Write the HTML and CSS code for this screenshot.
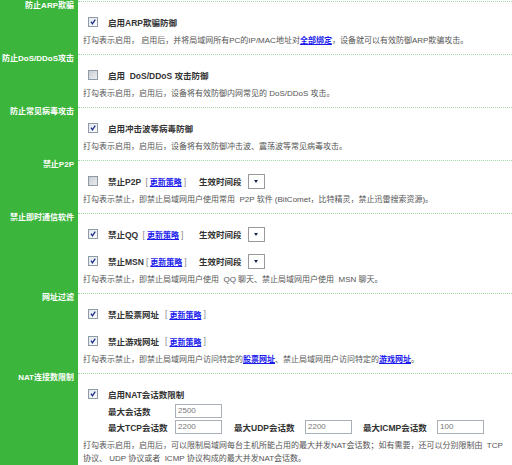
FILE: index.html
```html
<!DOCTYPE html>
<html>
<head>
<meta charset="utf-8">
<link rel="stylesheet" href="styles.css">
</head>
<body>
<div class="page">

	<div class="sec">
		<div class="label">防止ARP欺骗</div>
		<div class="body">
			<div class="opt">
				<span class="cb on"><svg viewBox="0 0 10 10"><path d="M2.5 4.5 L4.3 7.3 L7.8 2" /></svg></span>
				<b>启用ARP欺骗防御</b>
			</div>
			<p class="desc">打勾表示启用， 启用后，并将局域网所有PC的IP/MAC地址对<a href="#">全部绑定</a>，设备就可以有效防御ARP欺骗攻击。</p>
		</div>
	</div>

	<div class="sec">
		<div class="label">防止DoS/DDoS攻击</div>
		<div class="body">
			<div class="opt">
				<span class="cb"></span>
				<b>启用&nbsp; DoS/DDoS 攻击防御</b>
			</div>
			<p class="desc">打勾表示启用，启用后，设备将有效防御内网常见的 DoS/DDoS 攻击。</p>
		</div>
	</div>

	<div class="sec">
		<div class="label">防止常见病毒攻击</div>
		<div class="body">
			<div class="opt">
				<span class="cb on"><svg viewBox="0 0 10 10"><path d="M2.5 4.5 L4.3 7.3 L7.8 2" /></svg></span>
				<b>启用冲击波等病毒防御</b>
			</div>
			<p class="desc">打勾表示启用，启用后，设备将有效防御冲击波、震荡波等常见病毒攻击。</p>
		</div>
	</div>

	<div class="sec">
		<div class="label">禁止P2P</div>
		<div class="body">
			<div class="opt">
				<span class="cb"></span>
				<span class="title"><b>禁止P2P</b> <span class="br">[</span><a class="pol" href="#">更新策略</a><span class="br">]</span></span>
				<b class="when">生效时间段</b>
				<span class="sel"></span>
			</div>
			<p class="desc">打勾表示禁止，即禁止局域网用户使用常用 &nbsp;P2P 软件 (BitComet，比特精灵，禁止迅雷搜索资源)。</p>
		</div>
	</div>

	<div class="sec">
		<div class="label">禁止即时通信软件</div>
		<div class="body">
			<div class="opt">
				<span class="cb on"><svg viewBox="0 0 10 10"><path d="M2.5 4.5 L4.3 7.3 L7.8 2" /></svg></span>
				<span class="title"><b>禁止QQ</b> <span class="br">[</span><a class="pol" href="#">更新策略</a><span class="br">]</span></span>
				<b class="when">生效时间段</b>
				<span class="sel"></span>
			</div>
			<div class="opt">
				<span class="cb on"><svg viewBox="0 0 10 10"><path d="M2.5 4.5 L4.3 7.3 L7.8 2" /></svg></span>
				<span class="title"><b>禁止MSN</b><span class="br">[</span><a class="pol" href="#">更新策略</a><span class="br">]</span></span>
				<b class="when">生效时间段</b>
				<span class="sel"></span>
			</div>
			<p class="desc">打勾表示禁止，即禁止局域网用户使用 &nbsp;QQ 聊天、禁止局域网用户使用 &nbsp;MSN 聊天。</p>
		</div>
	</div>

	<div class="sec">
		<div class="label">网址过滤</div>
		<div class="body">
			<div class="opt">
				<span class="cb on"><svg viewBox="0 0 10 10"><path d="M2.5 4.5 L4.3 7.3 L7.8 2" /></svg></span>
				<b>禁止股票网址</b><span class="br wide">[</span><a class="pol" href="#">更新策略</a><span class="br">]</span>
			</div>
			<div class="opt">
				<span class="cb on"><svg viewBox="0 0 10 10"><path d="M2.5 4.5 L4.3 7.3 L7.8 2" /></svg></span>
				<b>禁止游戏网址</b><span class="br wide">[</span><a class="pol" href="#">更新策略</a><span class="br">]</span>
			</div>
			<p class="desc">打勾表示禁止，即禁止局域网用户访问特定的<a href="#">股票网址</a>、禁止局域网用户访问特定的<a href="#">游戏网址</a>。</p>
		</div>
	</div>

	<div class="sec nat">
		<div class="label">NAT连接数限制</div>
		<div class="body">
			<div class="opt">
				<span class="cb on"><svg viewBox="0 0 10 10"><path d="M2.5 4.5 L4.3 7.3 L7.8 2" /></svg></span>
				<b>启用NAT会话数限制</b>
			</div>
			<div class="fields">
				<b>最大会话数</b><span class="inp">2500</span>
				<span></span><span></span><span></span><span></span>
				<b>最大TCP会话数</b><span class="inp">2200</span>
				<b>最大UDP会话数</b><span class="inp">2200</span>
				<b>最大ICMP会话数</b><span class="inp">100</span>
			</div>
			<p class="desc">打勾表示启用，启用后，可以限制局域网每台主机所能占用的最大并发NAT会话数；如有需要，还可以分别限制由 &nbsp;TCP 协议、 UDP 协议或者 &nbsp;ICMP 协议构成的最大并发NAT会话数。</p>
		</div>
	</div>

</div>
</body>
</html>
```

FILE: styles.css
```css
body {
	margin: 0;
	background-color: #fff;
	font-family: "Liberation Sans", "Noto Sans CJK SC", sans-serif;
	font-size: 8px;
	color: #555;
}

.page {
	width: 512px;
	height: 465px;
	overflow: hidden;
}

.sec {
	display: flex;
}

.label {
	width: 74px;
	flex: none;
	padding-right: 4px;
	background-color: #3cb53c;
	color: #fff;
	font-weight: bold;
	font-size: 8px;
	line-height: 7px;
	text-align: right;
	white-space: nowrap;
}

.sec:first-child .label {
	padding-top: 2px;
}

.body {
	flex: 1;
	padding: 11px 0 5px 5px;
	border-bottom: 1px dotted #a3d9a3;
}

.sec:first-child .body {
	margin-top: 1px;
	border-top: 1px dotted #a3d9a3;
}

.opt {
	display: flex;
	align-items: center;
	height: 18px;
	padding-left: 5px;
	white-space: nowrap;
	color: #333;
	font-size: 8.5px;
}

.opt + .opt {
	margin-top: 9px;
}

.opt b,
.fields b {
	color: #333;
}

.cb {
	width: 8px;
	height: 8px;
	margin-right: 10px;
	border: 1px solid #8e9aa6;
	background: linear-gradient(135deg, #c9cdd2, #eceef0);
	display: inline-block;
	flex: none;
}

.cb.on {
	background: linear-gradient(135deg, #e3e8ee, #fbfcfd);
}

.cb svg {
	display: block;
	width: 8px;
	height: 8px;
	fill: none;
	stroke: #1b2f8a;
	stroke-width: 1.6;
}

.title {
	width: 91px;
	flex: none;
}

.br {
	color: #888;
	font-weight: normal;
	margin-left: 2px;
}

.br.wide {
	margin-left: 6px;
}

a {
	color: #1a1aee;
	font-weight: bold;
	text-decoration: underline;
}

.opt .pol {
	margin-left: 2px;
	font-size: 8px;
}

.when {
	margin-right: 6px;
}

.sel {
	position: relative;
	width: 15px;
	height: 13px;
	border: 1px solid #9a9a9a;
	background-color: #fff;
}

.sel::after {
	content: "";
	position: absolute;
	left: 5px;
	top: 5px;
	border-left: 2.5px solid transparent;
	border-right: 2.5px solid transparent;
	border-top: 3px solid #1b2a5a;
}

.desc {
	margin: 2px 0 0;
	line-height: 16px;
	white-space: nowrap;
}

.nat .body {
	padding-top: 12px;
	border-bottom: 0;
}

.nat .opt {
	height: 16px;
}

.fields {
	display: grid;
	grid-template-columns: 67px 59px 71px 58px 74px 47px;
	grid-auto-rows: 16px;
	align-items: center;
	margin: 1px 0 0 25px;
	font-size: 8.5px;
	white-space: nowrap;
}

.inp {
	width: 43px;
	height: 12px;
	padding-left: 2px;
	border: 1px solid #a9b0b8;
	color: #777;
	line-height: 12px;
	font-size: 8px;
}

.nat .desc {
	margin-top: 4px;
	line-height: 13px;
	white-space: normal;
}
```
